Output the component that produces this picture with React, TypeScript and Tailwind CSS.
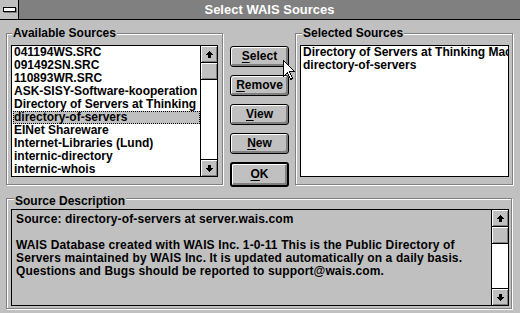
import React from 'react';

const available = [
  '041194WS.SRC',
  '091492SN.SRC',
  '110893WR.SRC',
  'ASK-SISY-Software-kooperation',
  'Directory of Servers at Thinking',
  'directory-of-servers',
  'EINet Shareware',
  'Internet-Libraries (Lund)',
  'internic-directory',
  'internic-whois',
];

const selected = ['Directory of Servers at Thinking Machines', 'directory-of-servers'];

const description = [
  'Source: directory-of-servers at server.wais.com',
  '',
  'WAIS Database created with WAIS Inc. 1-0-11 This is the Public Directory of',
  'Servers maintained by WAIS Inc. It is updated automatically on a daily basis.',
  'Questions and Bugs should be reported to support@wais.com.',
];

function Arrow({ down }: { down?: boolean }) {
  return (
    <svg
      width="7"
      height="7"
      viewBox="0 0 7 7"
      shapeRendering="crispEdges"
      className={down ? 'rotate-180' : ''}
    >
      <rect x="3" y="0" width="1" height="1" fill="#000" />
      <rect x="2" y="1" width="3" height="1" fill="#000" />
      <rect x="1" y="2" width="5" height="1" fill="#000" />
      <rect x="0" y="3" width="7" height="1" fill="#000" />
      <rect x="2" y="4" width="3" height="3" fill="#000" />
    </svg>
  );
}

function ScrollBar() {
  return (
    <div className="flex w-[17px] shrink-0 flex-col border-l border-black bg-white">
      <div className="flex h-[17px] items-center justify-center border-b border-black bg-[#c0c0c0] shadow-[inset_1px_1px_0_#fff,inset_-1px_-1px_0_#808080]">
        <Arrow />
      </div>
      <div className="h-[17px] border-b border-black bg-[#c0c0c0] shadow-[inset_1px_1px_0_#fff,inset_-1px_-1px_0_#808080]" />
      <div className="flex-1" />
      <div className="flex h-[17px] items-center justify-center border-t border-black bg-[#c0c0c0] shadow-[inset_1px_1px_0_#fff,inset_-1px_-1px_0_#808080]">
        <Arrow down />
      </div>
    </div>
  );
}

function Btn({ label, isDefault }: { label: string; isDefault?: boolean }) {
  return (
    <button
      className={
        isDefault
          ? 'flex h-[25px] w-[59px] items-center justify-center rounded-[3px] border-2 border-black bg-[#c0c0c0] font-bold shadow-[inset_1px_1px_0_#fff,inset_-2px_-2px_0_#808080]'
          : 'flex h-[21px] w-[59px] items-center justify-center rounded-[3px] border border-black bg-[#c0c0c0] font-bold shadow-[inset_1px_1px_0_#fff,inset_-2px_-2px_0_#808080]'
      }
    >
      <span className="leading-[13px]">
        <span className="underline underline-offset-2">{label[0]}</span>
        {label.slice(1)}
      </span>
    </button>
  );
}

function Cursor() {
  return (
    <svg
      className="absolute left-[283px] top-[60px]"
      width="13"
      height="20"
      viewBox="0 0 13 20"
      shapeRendering="crispEdges"
    >
      <path
        d="M0.5 0.5 L0.5 16.5 L4.5 12.5 L7.5 19.5 L9.5 18.5 L6.5 11.5 L11.5 11.5 Z"
        fill="#fff"
        stroke="#000"
        strokeWidth="1"
      />
    </svg>
  );
}

export default function App() {
  return (
    <div className="relative h-[313px] w-[520px] overflow-hidden bg-[#c0c0c0] font-['Liberation_Sans',Arial,sans-serif] text-[12px] text-black">
      {/* title bar */}
      <div className="flex h-[20px] border-b border-black">
        <div className="flex w-[19px] items-center justify-center border-r border-black bg-[#c0c0c0]">
          <div className="h-[5px] w-[13px] border border-black bg-white shadow-[1px_1px_0_#808080]" />
        </div>
        <div className="flex flex-1 items-center justify-center bg-[#808080] text-[13px] font-bold text-white">
          Select WAIS Sources
        </div>
      </div>

      <div className="px-[6px] pt-[13px]">
        <div className="flex items-start">
          {/* available */}
          <div className="relative h-[152px] w-[217px] border border-[#808080] px-[4px] pt-[11px] shadow-[inset_1px_1px_0_#fff,1px_1px_0_#fff]">
            <span className="absolute -top-[7px] left-[5px] bg-[#c0c0c0] px-[1px] font-bold leading-[13px]">
              Available Sources
            </span>
            <div className="flex h-[132px] w-[207px] border border-black bg-white">
              <div className="flex-1 overflow-hidden">
                {available.map((item, i) => (
                  <div
                    key={item}
                    className={
                      i === 5
                        ? 'ml-[1px] h-[13px] whitespace-nowrap bg-[#c0c0c0] pl-[1px] font-bold leading-[13px] outline-1 -outline-offset-1 outline-dotted outline-black'
                        : 'h-[13px] whitespace-nowrap pl-[2px] font-bold leading-[13px]'
                    }
                  >
                    {item}
                  </div>
                ))}
              </div>
              <ScrollBar />
            </div>
          </div>

          {/* buttons */}
          <div className="ml-[7px] mt-[13px] flex flex-col gap-[8px]">
            <Btn label="Select" />
            <Btn label="Remove" />
            <Btn label="View" />
            <Btn label="New" />
            <Btn label="OK" isDefault />
          </div>

          {/* selected */}
          <div className="relative ml-[6px] h-[152px] w-[218px] border border-[#808080] pl-[4px] pt-[11px] shadow-[inset_1px_1px_0_#fff,1px_1px_0_#fff]">
            <span className="absolute -top-[7px] left-[6px] bg-[#c0c0c0] px-[1px] font-bold leading-[13px]">
              Selected Sources
            </span>
            <div className="h-[132px] w-[209px] overflow-hidden border border-black bg-white">
              {selected.map((item) => (
                <div key={item} className="h-[13px] whitespace-nowrap pl-[2px] font-bold leading-[13px]">
                  {item}
                </div>
              ))}
            </div>
          </div>
        </div>

        {/* description */}
        <div className="relative mt-[11px] h-[111px] w-[506px] border border-[#808080] px-[4px] pt-[10px] shadow-[inset_1px_1px_0_#fff,1px_1px_0_#fff]">
          <span className="absolute -top-[4px] left-[7px] bg-[#c0c0c0] px-[1px] font-bold leading-[13px]">
            Source Description
          </span>
          <div className="flex h-[97px] w-[498px] border border-black bg-[#c0c0c0]">
            <div className="flex-1 overflow-hidden pl-[4px] pt-[3px]">
              {description.map((line, i) => (
                <div key={i} className="h-[13px] whitespace-nowrap font-bold leading-[13px] tracking-[0.13px]">
                  {line}
                </div>
              ))}
            </div>
            <ScrollBar />
          </div>
        </div>
      </div>

      <Cursor />
    </div>
  );
}
